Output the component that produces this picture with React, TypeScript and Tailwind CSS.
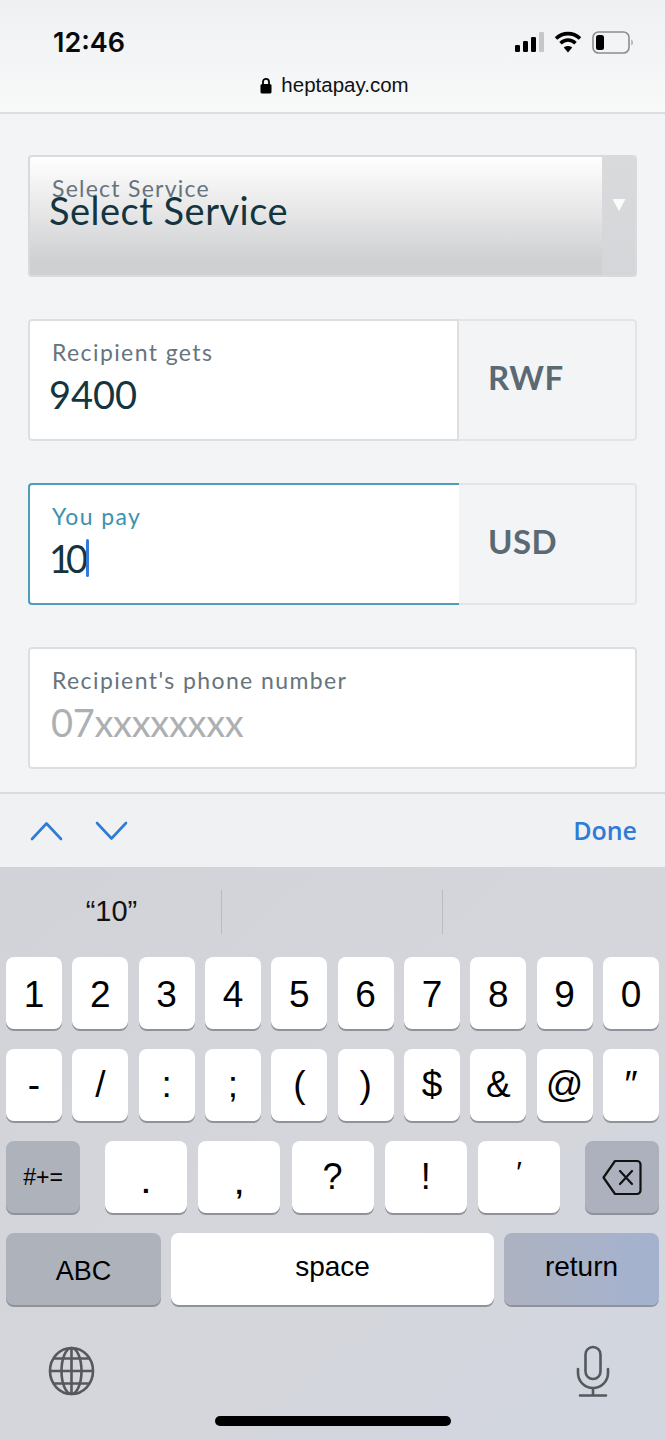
import React from "react";

const formFont = "font-['Lato',sans-serif]";
const keyFont = "font-['Liberation_Sans',sans-serif]";

const numberKeys = ["1", "2", "3", "4", "5", "6", "7", "8", "9", "0"];
const symbolKeys = ["-", "/", ":", ";", "(", ")", "$", "&", "@", "\u2033"];
const punctuationKeys = [
  { label: ".", pos: "pt-[14px] text-[28px] font-bold" },
  { label: ",", pos: "pt-[16px] text-[28px] font-bold" },
  { label: "?", pos: "text-[36px]" },
  { label: "!", pos: "text-[36px]" },
  { label: "\u2032", pos: "pb-[12px] text-[30px]" },
];

const Key = ({ children, className = "bg-white" }: { children: React.ReactNode; className?: string }) => (
  <div
    className={`flex h-[72px] items-center justify-center rounded-[8px] text-black shadow-[0_2px_0_#8f9298] ${className}`}
  >
    {children}
  </div>
);

const Field = ({
  label,
  value,
  unit,
  focused,
  placeholder,
}: {
  label: string;
  value: string;
  unit?: string;
  focused?: boolean;
  placeholder?: boolean;
}) => (
  <div className="flex h-[122px] rounded-[4px] bg-white">
    <div
      className={`flex min-w-0 flex-1 flex-col border-2 pl-[22px] pt-[18px] ${
        unit ? "rounded-l-[4px]" : "rounded-[4px]"
      } ${focused ? "border-r-0 border-[#4f9dbc]" : "border-[#dcdee0]"}`}
    >
      <div className={`h-[26px] text-[23px] leading-[26px] tracking-[1.4px] ${focused ? "text-[#3c91b0]" : "text-[#66747d]"}`}>
        {label}
      </div>
      <div
        className={`mt-[5px] flex h-[48px] items-center text-[38px] leading-[48px] ${
          placeholder ? "text-[#adb0b3]" : "text-[#14353f]"
        }`}
      >
        <span className={`${placeholder ? "-ml-[1px] tracking-[-0.3px]" : "-ml-[3px]"} ${focused ? "tracking-[-5px]" : ""}`}>{value}</span>
        {focused && <span className="ml-[3px] h-[38px] w-[3px] shrink-0 rounded-full bg-[#3478d8]" />}
      </div>
    </div>
    {unit && (
      <div className="flex w-[178px] items-center rounded-r-[4px] border-2 border-l-0 border-[#e2e4e5] bg-[#f2f4f5] pb-[4px] pl-[29px] text-[33px] font-bold tracking-[0.5px] text-[#5a6972]">
        {unit}
      </div>
    )}
  </div>
);

export default function App() {
  return (
    <div className="flex h-[1440px] w-[665px] flex-col overflow-hidden bg-[#f2f4f6]">
      <header className={`h-[114px] shrink-0 border-b-2 border-[#dcdee0] bg-gradient-to-b from-[#eff0f2] to-[#f8f9f9] ${keyFont}`}>
        <div className="flex h-[84px] items-center justify-between pl-[53px] pr-[31px]">
          <span className="text-[27px] font-semibold leading-none text-[#0a0a0a] font-['Inter',sans-serif]">12:46</span>
          <div className="flex items-center">
            <svg width="30" height="22" viewBox="0 0 30 22" className="mr-[9px]">
              <rect x="0" y="14" width="5" height="7" rx="1.2" fill="#000" />
              <rect x="8" y="10" width="5" height="11" rx="1.2" fill="#000" />
              <rect x="16" y="6" width="5" height="15" rx="1.2" fill="#000" />
              <rect x="24" y="1" width="5" height="20" rx="1.2" fill="#c5c7c9" />
            </svg>
            <svg width="28" height="24" viewBox="0 0 28 24" className="mr-[10px]" fill="none" stroke="#000" strokeWidth="3.6">
              <path d="M2 8.5C9 2 19 2 26 8.5" />
              <path d="M6.5 13.2C11 9 17 9 21.5 13.2" />
              <path d="M14 22.5 9.8 17.6C12 15.6 16 15.6 18.2 17.6Z" fill="#000" stroke="none" />
            </svg>
            <svg width="42" height="24" viewBox="0 0 42 24" fill="none">
              <rect x="1" y="2" width="36" height="21" rx="5.5" stroke="#8b8d8f" strokeWidth="1.6" />
              <rect x="4" y="5" width="8" height="15" rx="2.5" fill="#000" />
              <path d="M39.5 9.5C41 10.5 41 14.5 39.5 15.5Z" fill="#8b8d8f" />
            </svg>
          </div>
        </div>
        <div className="-mt-[11px] flex items-center justify-center gap-[9px] pl-[4px] text-[20.5px] leading-[24px] text-[#111]">
          <svg width="12" height="17" viewBox="0 0 12 17">
            <path d="M3 8V4.8a3 3 0 0 1 6 0V8" fill="none" stroke="#000" strokeWidth="1.8" />
            <rect x="0.5" y="7" width="11" height="9.5" rx="1.6" fill="#000" />
          </svg>
          <span>heptapay.com</span>
        </div>
      </header>

      <main className={`flex flex-1 flex-col gap-[42px] px-[28px] pt-[41px] ${formFont}`}>
        <div className="flex h-[122px] overflow-hidden rounded-[4px] border-2 border-[#d8dadc] bg-gradient-to-b from-white via-[#e9e9ea] via-[42%] to-[#cfd0d2] to-[88%]">
          <div className="flex-1 pl-[22px] pt-[18px]">
            <div className="h-[26px] text-[23px] leading-[26px] tracking-[1.25px] text-[#66747d]">Select Service</div>
            <div className="-ml-[3px] -mt-[13px] h-[44px] text-[38px] leading-[44px] tracking-[0.5px] text-[#14353f]">Select Service</div>
          </div>
          <div className="flex w-[33px] justify-center bg-gradient-to-b from-[#d9dadc] to-[#d5d6d9] pt-[41px]">
            <svg width="14" height="14" viewBox="0 0 14 14">
              <path d="M0.5 1h13L7 13Z" fill="#fbfbfb" />
            </svg>
          </div>
        </div>
        <Field label="Recipient gets" value="9400" unit="RWF" />
        <Field label="You pay" value="10" unit="USD" focused />
        <Field label="Recipient's phone number" value="07xxxxxxxx" placeholder />
      </main>

      <div className={`h-[648px] shrink-0 ${keyFont}`}>
        <div className="flex h-[75px] items-center justify-between border-t-2 border-[#d9dbdd] bg-[#eff1f3] pl-[30px] pr-[28px]">
          <div className="flex gap-[32px]">
            <svg width="33" height="20" viewBox="0 0 33 20" fill="none" stroke="#2f7bd6" strokeWidth="2.6" strokeLinecap="round" strokeLinejoin="round">
              <path d="M2 18 16.5 2.5 31 18" />
            </svg>
            <svg width="33" height="20" viewBox="0 0 33 20" fill="none" stroke="#2f7bd6" strokeWidth="2.6" strokeLinecap="round" strokeLinejoin="round">
              <path d="M2 2 16.5 17.5 31 2" />
            </svg>
          </div>
          <span className="text-[25px] font-semibold text-[#2f7bd6] font-['Open_Sans',sans-serif]">Done</span>
        </div>

        <div className="relative h-[573px] bg-gradient-to-br from-[#d1d3d8] via-[#d5d6db] to-[#d2d6e0] px-[6px]">
          <div className="flex h-[90px] items-center">
            <div className="w-[215px] pr-[4px] text-center text-[29px] text-[#111]">“10”</div>
            <div className="h-[44px] w-px bg-[#b8babf]" />
            <div className="w-[220px]" />
            <div className="h-[44px] w-px bg-[#b8babf]" />
          </div>

          <div className="flex flex-col gap-[20px]">
            <div className="flex justify-between">
              {numberKeys.map((k) => (
                <Key key={k} className="w-[56px] bg-white pt-[3px] text-[37px]">
                  {k}
                </Key>
              ))}
            </div>
            <div className="flex justify-between">
              {symbolKeys.map((k) => (
                <Key key={k} className="w-[56px] bg-white text-[37px]">
                  {k}
                </Key>
              ))}
            </div>
            <div className="flex">
              <Key className="w-[74px] bg-[#aeb2bb] text-[23px]">#+=</Key>
              <div className="mx-[25px] flex flex-1 justify-between">
                {punctuationKeys.map((k) => (
                  <Key key={k.label} className={`w-[82px] bg-white ${k.pos}`}>
                    {k.label}
                  </Key>
                ))}
              </div>
              <Key className="w-[74px] bg-[#adb1bd]">
                <svg width="40" height="37" viewBox="0 0 40 37" fill="none" stroke="#111" strokeWidth="2.2" strokeLinejoin="round" strokeLinecap="round">
                  <path d="M13 2h22a3.5 3.5 0 0 1 3.5 3.5v26A3.5 3.5 0 0 1 35 35H13L1.5 18.5Z" />
                  <path d="m18 12 12 13M30 12 18 25" />
                </svg>
              </Key>
            </div>
            <div className="flex gap-[10px]">
              <Key className="w-[155px] bg-[#aeb2bb] pt-[4px] text-[27px]">ABC</Key>
              <Key className="flex-1 bg-white pb-[4px] text-[28px]">space</Key>
              <Key className="w-[155px] bg-gradient-to-r from-[#adb2c0] to-[#a4b2d0] pb-[4px] text-[28px]">return</Key>
            </div>
          </div>

          <div className="mt-[40px] flex items-center justify-between pl-[42px] pr-[49px]">
            <svg width="47" height="50" viewBox="0 0 47 50" fill="none" stroke="#55585c" strokeWidth="2.6">
              <ellipse cx="23.5" cy="25" rx="21.5" ry="23" />
              <ellipse cx="23.5" cy="25" rx="10" ry="23" />
              <path d="M23.5 2v46M2 25h43M6 12.5h35M6 37.5h35" />
            </svg>
            <svg width="34" height="52" viewBox="0 0 34 52" fill="none" stroke="#55585c" strokeWidth="2.6" strokeLinecap="round">
              <rect x="9.5" y="2" width="15" height="32" rx="7.5" />
              <path d="M2 24v4a15 15 0 0 0 30 0v-4M17 43v7M4 50.5h26" />
            </svg>
          </div>

          <div className="absolute bottom-[14px] left-[215px] h-[10px] w-[236px] rounded-full bg-black" />
        </div>
      </div>
    </div>
  );
}
